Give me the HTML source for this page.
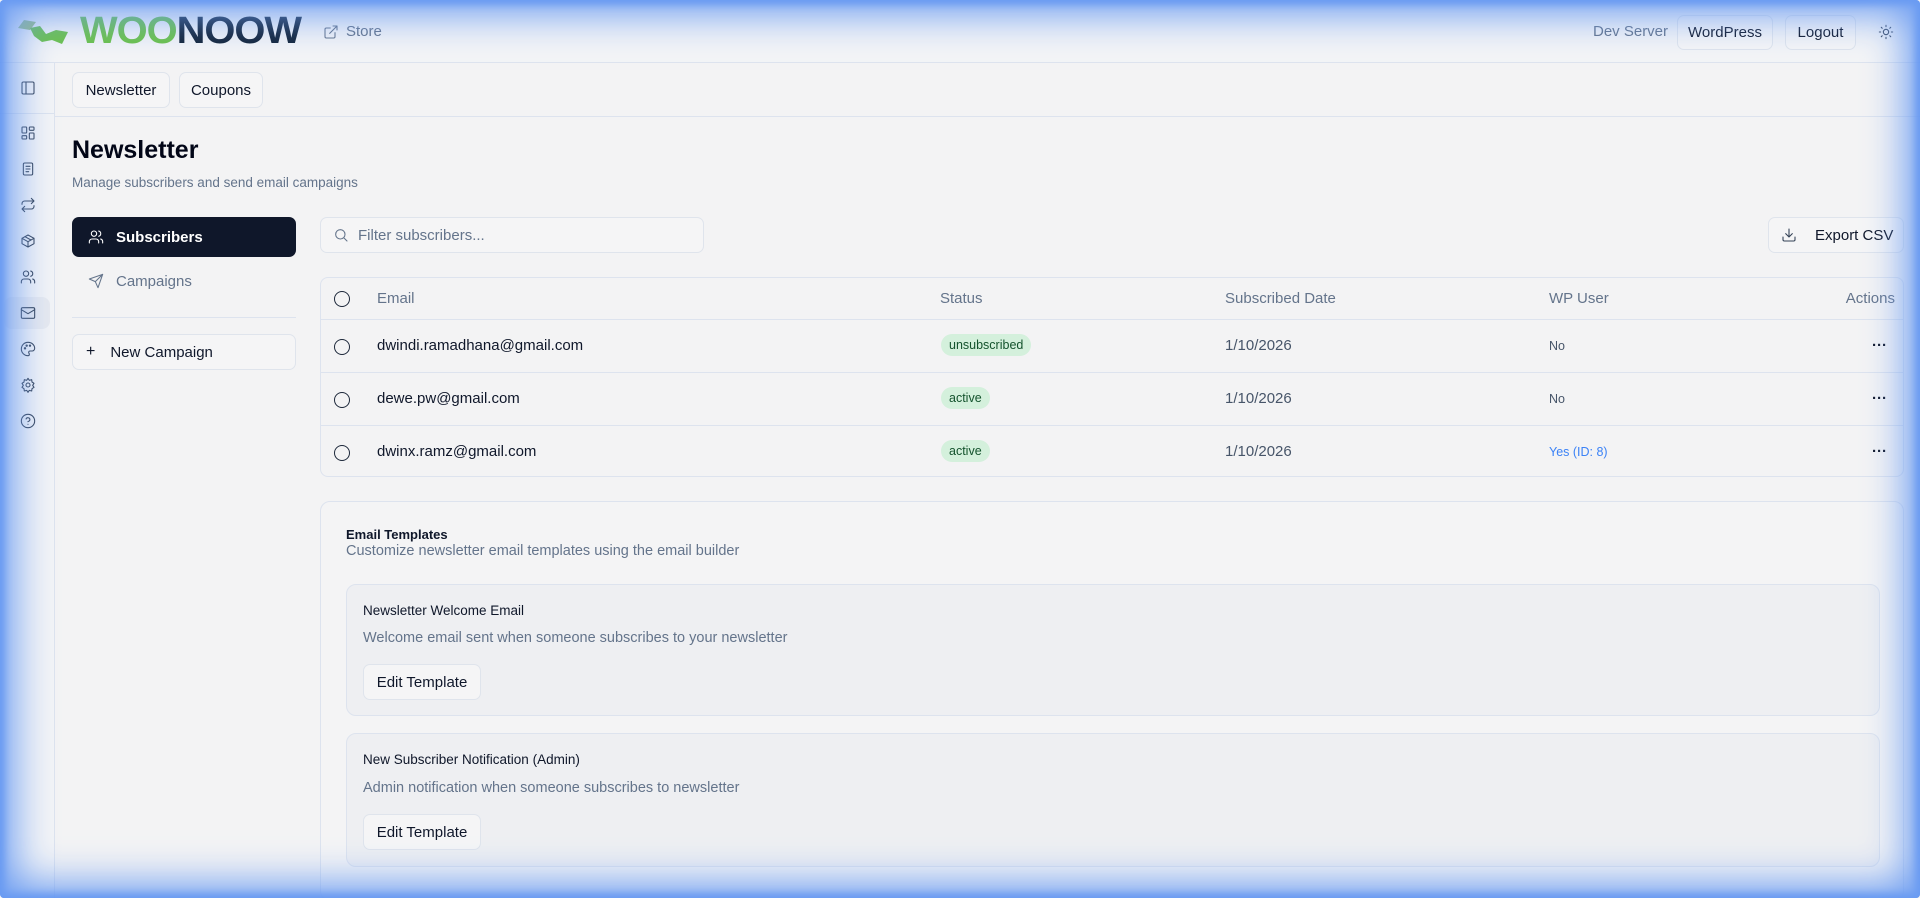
<!DOCTYPE html>
<html><head><meta charset="utf-8"><style>
*{box-sizing:border-box;margin:0;padding:0}
html,body{width:1920px;height:898px;overflow:hidden}
body{font-family:"Liberation Sans",sans-serif;background:#f3f3f4;color:#0f172a;position:relative}
.glow{position:absolute;inset:0;pointer-events:none;box-shadow:inset 0 0 40px 14px #6b9cf2, inset 0 0 8px 4px #5a8ff0;z-index:50;border-radius:4px}
.hdr{position:absolute;left:0;top:0;width:1920px;height:63px;border-bottom:1px solid #dde3ee;background:#f3f4f6}
.side{position:absolute;left:0;top:63px;width:55px;bottom:0;border-right:1px solid #dde3ee;background:#f3f4f6}
.btn{position:absolute;border:1px solid #dfe4ec;border-radius:7px;background:#f5f5f6;font-size:15px;display:flex;align-items:center;justify-content:center;color:#0f172a}
.t{position:absolute;white-space:nowrap}
.ic{position:absolute;width:16px;height:16px;fill:none;stroke:#334155;stroke-width:1.6;stroke-linecap:round;stroke-linejoin:round}
.row{position:absolute;left:0;right:0;border-top:1px solid #dde3ee}
.cb{position:absolute;left:13px;width:16px;height:16px;border:1.5px solid #1e293b;border-radius:50%}
.badge{position:absolute;background:#d4f0dc;border-radius:11px;font-size:12.5px;padding:4px 8px;color:#14532d}
.dots{position:absolute;right:16px;font-weight:bold;font-size:15px}
</style></head><body>
<div class="hdr">
  <svg style="position:absolute;left:16px;top:16px" width="60" height="32" viewBox="0 0 60 32"><path d="M2 12 L8 4 L20 6 L14 14Z" fill="#86b35a" opacity=".8"/><path d="M14 12 L24 10 L30 18 L40 14 L52 16 L46 28 L36 24 L26 26 L18 20Z" fill="#6cc24a"/></svg>
  <div class="t" style="left:80px;top:10px;font-size:38px;font-weight:bold;letter-spacing:-1px;transform:scaleX(1.05);transform-origin:left"><span style="color:#6cc24a">WOO</span><span style="color:#13243a">NOOW</span></div>
  <svg class="ic" style="left:323px;top:24px;stroke:#64748b" viewBox="0 0 24 24"><path d="M15 3h6v6M10 14L21 3M18 13v6a2 2 0 0 1-2 2H5a2 2 0 0 1-2-2V8a2 2 0 0 1 2-2h6"/></svg>
  <div class="t" style="left:346px;top:23px;font-size:15px;color:#64748b">Store</div>
  <div class="t" style="left:1593px;top:23px;font-size:15px;color:#64748b">Dev Server</div>
  <div class="btn" style="left:1677px;top:15px;width:96px;height:35px">WordPress</div>
  <div class="btn" style="left:1785px;top:15px;width:71px;height:35px">Logout</div>
  <svg class="ic" style="left:1878px;top:24px" viewBox="0 0 24 24"><circle cx="12" cy="12" r="4"/><path d="M12 2v2M12 20v2M4.9 4.9l1.4 1.4M17.7 17.7l1.4 1.4M2 12h2M20 12h2M4.9 19.1l1.4-1.4M17.7 6.3l1.4-1.4"/></svg>
</div>
<div class="side">
  <svg class="ic" style="left:20px;top:17px" viewBox="0 0 24 24"><rect x="3" y="3" width="18" height="18" rx="2"/><path d="M9 3v18"/></svg>
  <div style="position:absolute;left:0;top:50px;width:55px;border-top:1px solid #dde3ee"></div>
  <svg class="ic" style="left:20px;top:62px" viewBox="0 0 24 24"><rect x="3" y="3" width="7" height="9" rx="1"/><rect x="14" y="3" width="7" height="5" rx="1"/><rect x="14" y="12" width="7" height="9" rx="1"/><rect x="3" y="16" width="7" height="5" rx="1"/></svg>
  <svg class="ic" style="left:20px;top:98px" viewBox="0 0 24 24"><rect x="5" y="3" width="14" height="18" rx="2"/><path d="M9 8h6M9 12h6M9 16h4"/></svg>
  <svg class="ic" style="left:20px;top:134px" viewBox="0 0 24 24"><path d="M17 2l4 4-4 4M3 11V10a4 4 0 0 1 4-4h14M7 22l-4-4 4-4M21 13v1a4 4 0 0 1-4 4H3"/></svg>
  <svg class="ic" style="left:20px;top:170px" viewBox="0 0 24 24"><path d="M21 8l-9-5-9 5v8l9 5 9-5z"/><path d="M3 8l9 5 9-5M12 13v8M7.5 5.5l9 5"/></svg>
  <svg class="ic" style="left:20px;top:206px" viewBox="0 0 24 24"><circle cx="9" cy="7" r="4"/><path d="M2 21v-2a4 4 0 0 1 4-4h6a4 4 0 0 1 4 4v2M16 3.1a4 4 0 0 1 0 7.8M22 21v-2a4 4 0 0 0-3-3.9"/></svg>
  <div style="position:absolute;left:4px;top:234px;width:46px;height:32px;background:#e8eaef;border-radius:8px"></div>
  <svg class="ic" style="left:20px;top:242px" viewBox="0 0 24 24"><rect x="2" y="4" width="20" height="16" rx="2"/><path d="M22 7l-10 6L2 7"/></svg>
  <svg class="ic" style="left:20px;top:278px" viewBox="0 0 24 24"><path d="M12 2a10 10 0 0 0 0 20c1.5 0 2-1 2-2 0-1.5-1-1.5-1-3 0-1 1-2 2-2h3a4 4 0 0 0 4-4c0-5-4.5-9-10-9z"/><circle cx="7.5" cy="11" r="1"/><circle cx="10" cy="7" r="1"/><circle cx="15" cy="7" r="1"/></svg>
  <svg class="ic" style="left:20px;top:314px" viewBox="0 0 24 24"><circle cx="12" cy="12" r="3"/><path d="M12 2l2 3 3.5-1 .5 3.5 3 2-2 3 2 3-3 2-.5 3.5-3.5-1-2 3-2-3-3.5 1-.5-3.5-3-2 2-3-2-3 3-2 .5-3.5 3.5 1z"/></svg>
  <svg class="ic" style="left:20px;top:350px" viewBox="0 0 24 24"><circle cx="12" cy="12" r="10"/><path d="M9.1 9a3 3 0 0 1 5.8 1c0 2-3 3-3 3M12 17h0"/></svg>
</div>
<div style="position:absolute;left:55px;top:116px;right:0;border-top:1px solid #dde3ee"></div>
<div class="btn" style="left:72px;top:72px;width:98px;height:36px">Newsletter</div>
<div class="btn" style="left:179px;top:72px;width:84px;height:36px">Coupons</div>

<div class="t" style="left:72px;top:136px;font-size:25px;font-weight:bold;color:#020617">Newsletter</div>
<div class="t" style="left:72px;top:175px;font-size:13.5px;color:#64748b">Manage subscribers and send email campaigns</div>

<div style="position:absolute;left:72px;top:217px;width:224px;height:40px;background:#0f172a;border-radius:7px"></div>
<svg class="ic" style="left:88px;top:229px;stroke:#fff" viewBox="0 0 24 24"><circle cx="9" cy="7" r="4"/><path d="M2 21v-2a4 4 0 0 1 4-4h6a4 4 0 0 1 4 4v2M16 3.1a4 4 0 0 1 0 7.8M22 21v-2a4 4 0 0 0-3-3.9"/></svg>
<div class="t" style="left:116px;top:229px;font-size:15px;font-weight:bold;color:#fff">Subscribers</div>
<svg class="ic" style="left:88px;top:273px;stroke:#64748b" viewBox="0 0 24 24"><path d="M22 2L11 13M22 2l-7 20-4-9-9-4z"/></svg>
<div class="t" style="left:116px;top:273px;font-size:15px;color:#64748b">Campaigns</div>
<div style="position:absolute;left:72px;top:317px;width:224px;border-top:1px solid #dde3ee"></div>
<div class="btn" style="left:72px;top:334px;width:224px;height:36px;justify-content:flex-start;padding-left:13px"><span style="font-size:16px;margin-right:15px">+</span>New Campaign</div>

<div class="btn" style="left:320px;top:217px;width:384px;height:36px;justify-content:flex-start;padding-left:37px;color:#64748b">Filter subscribers...</div>
<svg class="ic" style="left:333px;top:227px;stroke:#64748b" viewBox="0 0 24 24"><circle cx="11" cy="11" r="7"/><path d="M21 21l-4.3-4.3"/></svg>
<div class="btn" style="left:1768px;top:217px;width:136px;height:36px;justify-content:flex-start;padding-left:46px;font-weight:500">Export CSV</div>
<svg class="ic" style="left:1781px;top:227px" viewBox="0 0 24 24"><path d="M21 15v4a2 2 0 0 1-2 2H5a2 2 0 0 1-2-2v-4M7 10l5 5 5-5M12 15V3"/></svg>

<div style="position:absolute;left:320px;top:277px;width:1584px;height:200px;border:1px solid #dde3ee;border-radius:8px;font-size:15px">
  <div class="cb" style="top:13px"></div>
  <div class="t" style="left:56px;top:12px;color:#64748b">Email</div>
  <div class="t" style="left:619px;top:12px;color:#64748b">Status</div>
  <div class="t" style="left:904px;top:12px;color:#64748b">Subscribed Date</div>
  <div class="t" style="left:1228px;top:12px;color:#64748b">WP User</div>
  <div class="t" style="right:8px;top:12px;color:#64748b">Actions</div>
  <div class="row" style="top:41px;height:53px">
    <div class="cb" style="top:19px"></div><div class="t" style="left:56px;top:17px;font-weight:500">dwindi.ramadhana@gmail.com</div>
    <div class="badge" style="left:620px;top:14px">unsubscribed</div>
    <div class="t" style="left:904px;top:17px;color:#475569">1/10/2026</div>
    <div class="t" style="left:1228px;top:19px;font-size:12.5px;color:#475569">No</div><div class="dots" style="top:17px">···</div>
  </div>
  <div class="row" style="top:94px;height:53px">
    <div class="cb" style="top:19px"></div><div class="t" style="left:56px;top:17px;font-weight:500">dewe.pw@gmail.com</div>
    <div class="badge" style="left:620px;top:14px">active</div>
    <div class="t" style="left:904px;top:17px;color:#475569">1/10/2026</div>
    <div class="t" style="left:1228px;top:19px;font-size:12.5px;color:#475569">No</div><div class="dots" style="top:17px">···</div>
  </div>
  <div class="row" style="top:147px;height:53px">
    <div class="cb" style="top:19px"></div><div class="t" style="left:56px;top:17px;font-weight:500">dwinx.ramz@gmail.com</div>
    <div class="badge" style="left:620px;top:14px">active</div>
    <div class="t" style="left:904px;top:17px;color:#475569">1/10/2026</div>
    <div class="t" style="left:1228px;top:19px;font-size:12.5px;color:#3b82f6">Yes (ID: 8)</div><div class="dots" style="top:17px">···</div>
  </div>
</div>

<div style="position:absolute;left:320px;top:501px;width:1584px;height:400px;border:1px solid #dde3ee;border-radius:10px;background:#f4f4f5">
  <div class="t" style="left:25px;top:25px;font-size:13px;font-weight:bold">Email Templates</div>
  <div class="t" style="left:25px;top:41px;font-size:14.5px;color:#64748b">Customize newsletter email templates using the email builder</div>
  <div style="position:absolute;left:25px;top:82px;width:1534px;height:132px;border:1px solid #dde3ee;border-radius:10px;background:#eeeff2">
    <div class="t" style="left:16px;top:18px;font-size:13.5px;font-weight:500">Newsletter Welcome Email</div>
    <div class="t" style="left:16px;top:45px;font-size:14.5px;color:#64748b">Welcome email sent when someone subscribes to your newsletter</div>
    <div class="btn" style="left:16px;top:79px;width:118px;height:36px;font-weight:500">Edit Template</div>
  </div>
  <div style="position:absolute;left:25px;top:231px;width:1534px;height:134px;border:1px solid #dde3ee;border-radius:10px;background:#eeeff2">
    <div class="t" style="left:16px;top:18px;font-size:13.5px;font-weight:500">New Subscriber Notification (Admin)</div>
    <div class="t" style="left:16px;top:46px;font-size:14.5px;color:#64748b">Admin notification when someone subscribes to newsletter</div>
    <div class="btn" style="left:16px;top:80px;width:118px;height:36px;font-weight:500">Edit Template</div>
  </div>
</div>
<div class="glow"></div>
</body></html>
